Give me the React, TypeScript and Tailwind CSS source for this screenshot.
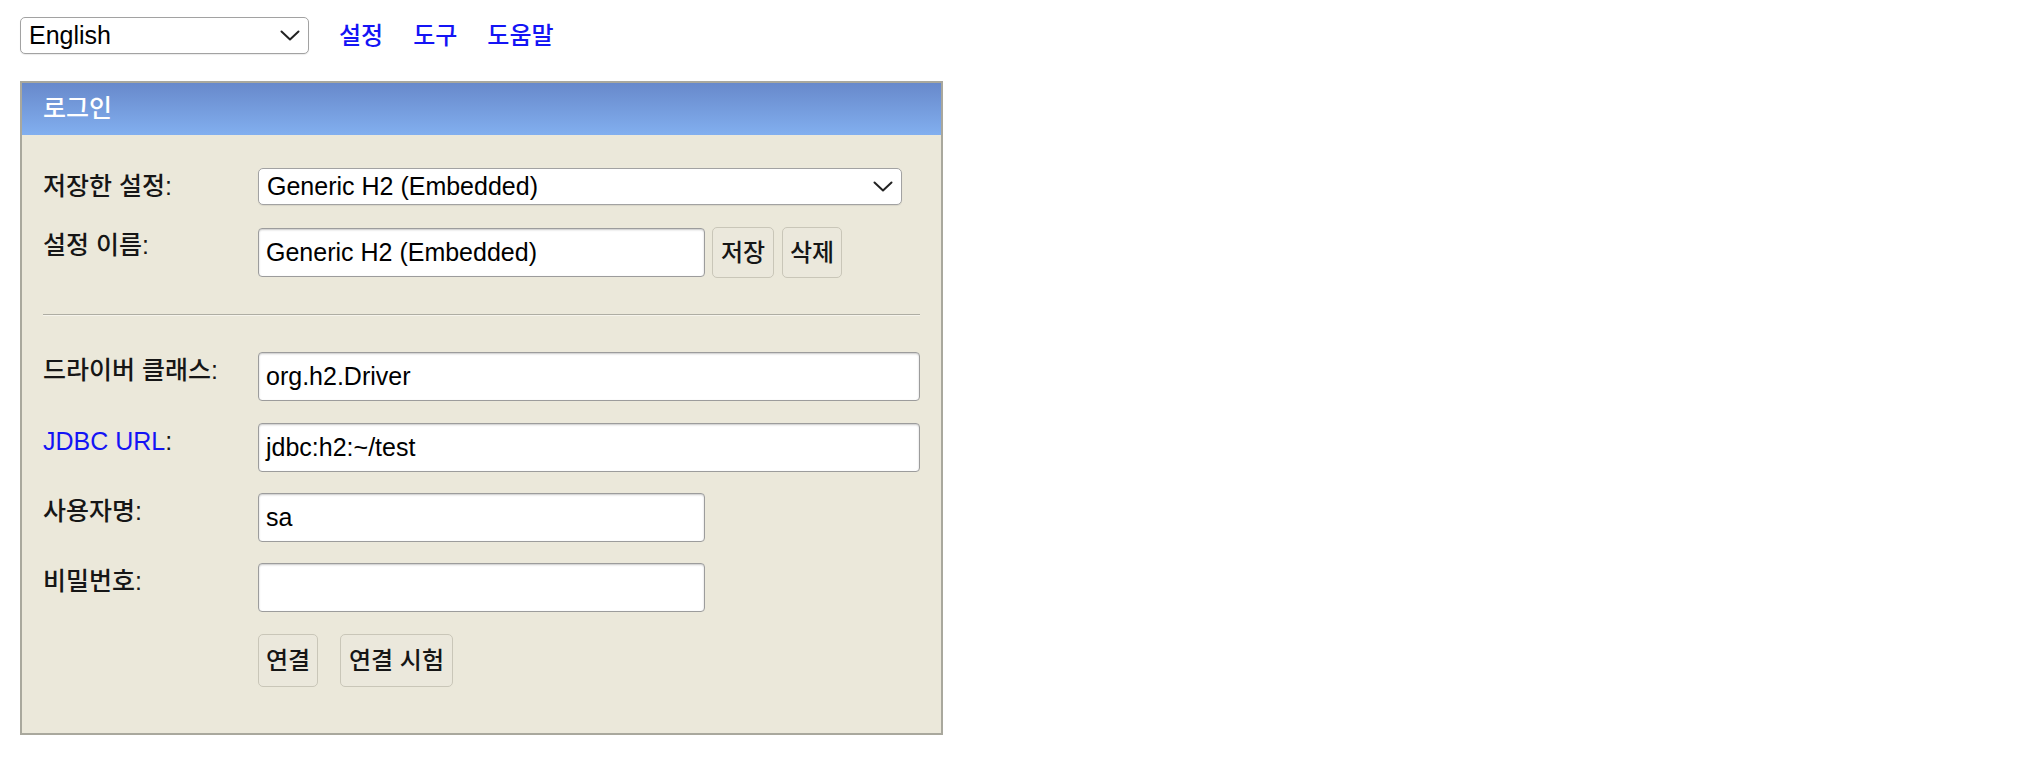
const font = "font-['Liberation_Sans','Noto_Sans_CJK_KR',sans-serif]";

function Chevron() {
  return (
    <svg width="20" height="11" viewBox="0 0 20 11" className="shrink-0">
      <path d="M1.5 1.5 L10 9.5 L18.5 1.5" fill="none" stroke="#222" strokeWidth="2" strokeLinecap="round" strokeLinejoin="round" />
    </svg>
  );
}

function SelectBox({ value, className }: { value: string; className: string }) {
  return (
    <div
      className={`flex h-[37px] items-center justify-between rounded-[5px] border border-[#a2a2a2] bg-white pl-[8px] pr-[8px] shadow-[0_1px_1px_rgba(0,0,0,0.08)] ${className}`}
    >
      <span className="text-[25px] leading-none text-black">{value}</span>
      <Chevron />
    </div>
  );
}

function TextBox({ value, className }: { value?: string; className: string }) {
  return (
    <div
      className={`flex h-[49px] items-center rounded-[4px] border border-[#9c9c9c] bg-white pl-[7px] text-[25px] leading-none text-black shadow-[inset_0_1px_2px_rgba(0,0,0,0.22)] ${className}`}
    >
      {value}
    </div>
  );
}

function Btn({ label, className }: { label: string; className: string }) {
  return (
    <div
      className={`flex items-center justify-center rounded-[5px] border border-[#c9c6b8] bg-[#ebe8dc] text-[24px] font-medium leading-none text-[#161616] ${className}`}
    >
      {label}
    </div>
  );
}

function Row({ label, children, className }: { label: React.ReactNode; children: React.ReactNode; className?: string }) {
  return (
    <div className={`flex items-start ${className ?? ""}`}>
      <div className="w-[215px] shrink-0 text-[25px] font-medium leading-[36px] text-[#161616]">{label}</div>
      {children}
    </div>
  );
}

export default function App() {
  return (
    <div className={`min-h-screen bg-white ${font}`}>
      {/* top bar */}
      <div className="flex items-center pl-[20px] pt-[17px]">
        <SelectBox value="English" className="w-[289px]" />
        <div className="ml-[30px] flex gap-[30px] text-[24px] font-medium leading-none text-[#1414f5]">
          <span>설정</span>
          <span>도구</span>
          <span>도움말</span>
        </div>
      </div>

      {/* login panel */}
      <div className="ml-[20px] mt-[27px] w-[923px] border-2 border-[#a9a89d] bg-[#ebe8da]">
        <div className="flex h-[52px] items-center bg-gradient-to-b from-[#6889cb] to-[#82afef] pl-[21px] text-[25px] font-medium text-white">
          로그인
        </div>

        <div className="pb-[46px] pl-[21px] pr-[21px] pt-[33px]">
          <Row label="저장한 설정:">
            <SelectBox value="Generic H2 (Embedded)" className="w-[644px]" />
          </Row>

          <Row label="설정 이름:" className="mt-[22px]">
            <div className="flex items-center">
              <TextBox value="Generic H2 (Embedded)" className="w-[447px]" />
              <Btn label="저장" className="ml-[7px] h-[51px] w-[62px]" />
              <Btn label="삭제" className="ml-[8px] h-[51px] w-[60px]" />
            </div>
          </Row>

          <div className="mt-[36px] h-[2px] border-t border-[#aeada3] bg-[#f6f4ec]" />

          <Row label="드라이버 클래스:" className="mt-[36px]">
            <TextBox value="org.h2.Driver" className="w-[662px]" />
          </Row>

          <Row
            label={
              <span className="font-normal">
                <span className="text-[#1414f5]">JDBC URL</span>:
              </span>
            }
            className="mt-[22px]"
          >
            <TextBox value="jdbc:h2:~/test" className="w-[662px]" />
          </Row>

          <Row label="사용자명:" className="mt-[21px]">
            <TextBox value="sa" className="w-[447px]" />
          </Row>

          <Row label="비밀번호:" className="mt-[21px]">
            <TextBox className="w-[447px]" />
          </Row>

          <div className="mt-[22px] flex gap-[22px] pl-[215px]">
            <Btn label="연결" className="h-[53px] w-[60px]" />
            <Btn label="연결 시험" className="h-[53px] w-[113px]" />
          </div>
        </div>
      </div>
    </div>
  );
}
